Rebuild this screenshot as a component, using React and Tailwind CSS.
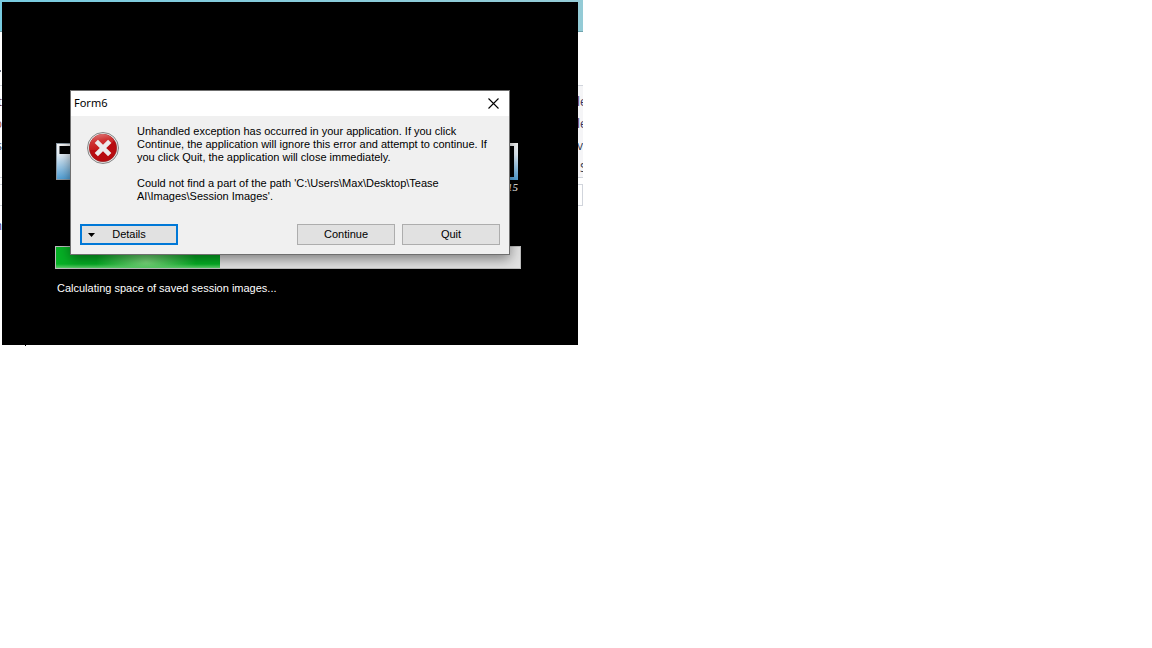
import { useState } from "react";

const leftEdge = [
  { text: "t", color: "text-[#7a3b34]" },
  { text: "p", color: "text-[#a0503f]" },
  { text: "s", color: "text-gray-600" },
];

const rightEdge = [
  { text: "le", color: "text-[#3b3560]" },
  { text: "le", color: "text-[#3b3560]" },
  { text: "ve", color: "text-gray-700" },
  { text: "S", color: "text-gray-700" },
];

// Browser page that shows around the splash screen
const BackPage = () => (
  <div className="flex flex-col justify-between w-[583px] h-[346px] overflow-hidden bg-white font-['Open_Sans',sans-serif] text-xs">
    <div>
      <div className="h-8 border-b border-[#6fa3ad] bg-gradient-to-r from-[#78cbe0] to-[#94cbd6]"></div>
      <div className="flex justify-between">
        <div className="w-[2px] overflow-hidden pt-[38px]">
          <div className="w-px h-[2px] bg-gray-500"></div>
          <div className="mt-[13px] flex flex-col items-end border-y border-gray-300 h-[93px] pt-[5px]">
            {leftEdge.map((row, i) => (
              <span key={i} className={`h-[22px] leading-[22px] ${row.color}`}>{row.text}</span>
            ))}
          </div>
          <div className="mt-[6px] h-[22px] border-y border-gray-300"></div>
          <div className="mt-3 flex justify-end text-[#3b3b8f]">n</div>
        </div>
        <div className="w-[6px] overflow-hidden pt-[53px]">
          <div className="flex flex-col items-start border-y border-gray-300 bg-[#f5f5f7] h-[93px] pt-[5px]">
            {rightEdge.map((row, i) => (
              <span key={i} className={`h-[22px] leading-[22px] whitespace-nowrap ${i === 3 ? "pl-[3px]" : ""} ${row.color}`}>{row.text}</span>
            ))}
          </div>
          <div className="mt-[6px] h-[22px] border border-l-0 border-gray-300"></div>
        </div>
      </div>
    </div>
    <div className="ml-[25px] size-px bg-black"></div>
  </div>
);

const Logo = () => (
  <svg className="w-[462px] h-[38px] shrink-0 self-end" viewBox="0 0 462 38" aria-hidden="true">
    <defs>
      <linearGradient id="logoFill" x1="0" y1="0" x2="0" y2="1">
        <stop offset="0" stopColor="#f6f6f6" />
        <stop offset="0.3" stopColor="#e4eef6" />
        <stop offset="1" stopColor="#4f9fd6" />
      </linearGradient>
    </defs>
    <rect x="0.5" y="0.5" width="30" height="36" fill="url(#logoFill)" stroke="#8a98a3" />
    <rect x="3.500" y="3" width="27" height="8" fill="#000" />
    <path fillRule="evenodd" d="M430 0H462V37H430ZM433 3V34H458V3Z" fill="url(#logoFill)" />
  </svg>
);

const ErrorIcon = () => (
  <svg className="size-8 shrink-0" viewBox="0 0 32 32" aria-hidden="true">
    <defs>
      <linearGradient id="errTop" x1="0" y1="0" x2="0.3" y2="1">
        <stop offset="0" stopColor="#e08080" />
        <stop offset="0.5" stopColor="#cf3535" />
        <stop offset="1" stopColor="#c41a1a" />
      </linearGradient>
    </defs>
    <circle cx="16" cy="16" r="15.5" fill="#e8e8e8" stroke="#858585" />
    <circle cx="16" cy="16" r="13.7" fill="#b80c10" stroke="#8d2222" strokeWidth="0.6" />
    <path d="M2.6 18A13.4 13.4 0 0 1 27 8.2C22 15 14 18.500 2.600 18Z" fill="url(#errTop)" />
    <path d="M9.300 9.300L22.700 22.700M22.700 9.300L9.300 22.700" stroke="#ececec" strokeWidth="4.600" />
  </svg>
);

const Splash = () => (
  <div className="absolute left-[2px] top-[2px] w-[576px] h-[343px] bg-black pl-[53px] pr-[57px] pt-[141px] font-['Liberation_Sans',sans-serif] text-[11px] text-white">
    <div className="flex flex-col h-[103px] pr-[3px]">
      <Logo />
      <span className="self-end font-['Liberation_Serif',serif] italic leading-3">15</span>
    </div>
    <div role="progressbar" aria-label="Loading" className="h-[23px] border border-[#bcbcbc] bg-[#e2e2e2]">
      <div className="relative h-full w-[164px] overflow-hidden bg-[#06b025]">
        <div className="absolute inset-0 bg-[radial-gradient(ellipse_50px_32px_at_55%_70%,#7bdc7d,transparent)]"></div>
        <div className="absolute inset-x-0 bottom-0 h-1 bg-gradient-to-t from-[#5acb68] to-transparent"></div>
      </div>
    </div>
    <p className="mt-[13px] pl-[2px] leading-[13px]">Calculating space of saved session images...</p>
  </div>
);

const buttonClass =
  "h-[21px] w-[98px] bg-[#e1e1e1] border border-[#adadad] leading-[13px] text-center";

const ErrorDialog = () => {
  const [open, setOpen] = useState(true);

  if (!open) return null;

  return (
    <div
      role="dialog"
      aria-labelledby="dialogTitle"
      className="absolute left-[70px] top-[90px] w-[440px] border border-[#6f6f6f] bg-[#f0f0f0] shadow-[0_4px_12px_rgba(0,0,0,0.45)] font-['Liberation_Sans',sans-serif] text-[11px] text-black"
    >
      <div className="flex items-center justify-between h-[25px] bg-white pl-[3px] pr-[10px]">
        <h1 id="dialogTitle" className="font-['Noto_Sans',sans-serif] text-[11px]">Form6</h1>
        <button aria-label="Close" onClick={() => setOpen(false)}>
          <svg className="block size-[11px]" viewBox="0 0 11 11" stroke="#000" strokeWidth="1.1">
            <path d="M0.500 0.500L10.500 10.500M10.500 0.500L0.500 10.500" />
          </svg>
        </button>
      </div>

      <div className="flex gap-[18px] px-4 pt-[9px]">
        <div className="pt-[7px]">
          <ErrorIcon />
        </div>
        <div className="leading-[13px] whitespace-nowrap">
          <p>
            Unhandled exception has occurred in your application. If you click<br />
            Continue, the application will ignore this error and attempt to continue. If<br />
            you click Quit, the application will close immediately.
          </p>
          <p className="mt-[13px]">
            Could not find a part of the path 'C:\Users\Max\Desktop\Tease<br />
            AI\Images\Session Images'.
          </p>
        </div>
      </div>

      <div className="flex items-center justify-between pt-[21px] pb-[9px] px-[9px]">
        <button className="relative h-[21px] w-[98px] bg-[#e1e1e1] border-2 border-[#0078d7] leading-[13px] text-center">
          <svg className="absolute left-[6px] top-[7px] w-[7px] h-1" viewBox="0 0 7 4">
            <path d="M0 0H7L3.500 4Z" />
          </svg>
          Details
        </button>
        <div className="flex gap-[7px]">
          <button className={buttonClass} onClick={() => setOpen(false)}>Continue</button>
          <button className={buttonClass} onClick={() => setOpen(false)}>Quit</button>
        </div>
      </div>
    </div>
  );
};

const App = () => {
  return (
    <div className="relative min-h-screen bg-white">
      <BackPage />
      <Splash />
      <ErrorDialog />
    </div>
  );
};

export default App;
